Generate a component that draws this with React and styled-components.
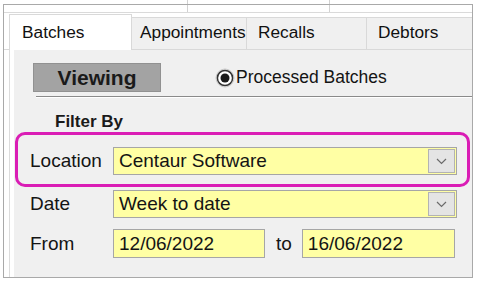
import React from "react";
import styled, { createGlobalStyle } from "styled-components";

const GlobalStyle = createGlobalStyle`
  html, body { margin: 0; padding: 0; background: #ffffff; }
  body { font-family: "Liberation Sans", Arial, sans-serif; color: #161616; }
  * { box-sizing: border-box; }
`;

const Page = styled.div`
  width: 480px;
  height: 283px;
  overflow: hidden;
  display: flex;
  flex-direction: column;
`;

const Cells = styled.div`
  display: flex;
  flex: none;
  height: ${(p) => p.$h}px;
  ${(p) => (p.$line ? "border-bottom: 1px solid #dadada;" : "")}
`;

const Cell = styled.div`
  flex: none;
  width: ${(p) => p.$w}px;
  border-right: 1px solid #d2d2d2;
`;

const Frame = styled.div`
  margin-left: 3px;
  width: 470px;
  height: 274px;
  border: 1px solid #a9a9a9;
  background: #ffffff;
  display: flex;
  flex-direction: column;
  overflow: hidden;
`;

const TabRow = styled.div`
  display: flex;
  align-items: flex-end;
  height: 37px;
  padding-left: 5px;
  border-bottom: 1px solid #d9d9d9;
  flex: none;
`;

const Tab = styled.div`
  flex: none;
  width: ${(p) => p.$w}px;
  height: ${(p) => (p.$active ? 36 : 32)}px;
  padding-left: ${(p) => p.$pl}px;
  padding-top: ${(p) => (p.$active ? 7 : 4)}px;
  font-size: 17.3px;
  line-height: 20px;
  color: #111;
  white-space: nowrap;
  background: ${(p) => (p.$active ? "#ffffff" : "#f0f0f0")};
  border-top: 1px solid #d9d9d9;
  border-right: 1px solid #d9d9d9;
  border-left: ${(p) => (p.$active ? "1px solid #d9d9d9" : "none")};
  margin-bottom: ${(p) => (p.$active ? -1 : 0)}px;
  position: relative;
  z-index: ${(p) => (p.$active ? 1 : 0)};
`;

const TabPage = styled.div`
  flex: 1;
  display: flex;
  margin-left: 5px;
  border-left: 1px solid #dcdcdc;
  padding: 0 0 0 4px;
`;

const Panel = styled.div`
  flex: 1;
  background: #f0f0f0;
  padding-top: 13px;
  display: flex;
  flex-direction: column;
`;

const ViewingRow = styled.div`
  display: flex;
  align-items: center;
  height: 29px;
  padding-left: 19px;
`;

const ViewingBox = styled.div`
  width: 128px;
  height: 29px;
  background: #a3a3a3;
  border: 1px solid #919191;
  display: flex;
  align-items: center;
  justify-content: center;
  font-weight: bold;
  font-size: 21px;
  color: #1a1a1a;
`;

const RadioOption = styled.label`
  display: flex;
  align-items: center;
  margin-left: 54px;
  gap: 1px;
  font-size: 17.5px;
  color: #141414;
`;

const Separator = styled.div`
  margin: 4px 0 0 22px;
  border-top: 1px solid #8a8a8a;
  border-bottom: 1px solid #ffffff;
`;

const SectionTitle = styled.div`
  margin: 14px 0 0 41px;
  font-weight: bold;
  font-size: 17px;
  line-height: 20px;
  color: #1a1a1a;
`;

const Highlight = styled.div`
  margin-left: 1px;
  width: 455px;
  border: 3px solid #da1db5;
  border-radius: 10px;
  padding: 12px 10px 9px 12px;
`;

const Row = styled.div`
  display: flex;
  align-items: center;
  height: ${(p) => p.$h || 28}px;
  margin-top: ${(p) => p.$mt || 0}px;
  margin-left: ${(p) => p.$ml || 0}px;
`;

const Label = styled.div`
  flex: none;
  width: 83px;
  font-size: 19px;
  color: #141414;
`;

const Select = styled.div`
  flex: none;
  width: 344px;
  height: 28px;
  background: #ffffa4;
  border: 1px solid #a6a6a6;
  display: flex;
  align-items: center;
  padding-left: 5px;
  font-size: 19px;
  color: #141414;
`;

const DropButton = styled.div`
  margin-left: auto;
  margin-right: 1px;
  width: 27px;
  height: 24px;
  background: #e4e4e4;
  border: 1px solid #b3b3b3;
  display: flex;
  align-items: center;
  justify-content: center;
`;

const Input = styled.div`
  flex: none;
  width: ${(p) => p.$w}px;
  height: 29px;
  background: #ffffa4;
  border: 1px solid #a6a6a6;
  display: flex;
  align-items: center;
  padding-left: 5px;
  font-size: 19px;
  color: #141414;
`;

const Joiner = styled.div`
  font-size: 19px;
  margin: 0 10px 0 11px;
  color: #141414;
`;

const Chevron = () => (
  <svg width="11" height="7" viewBox="0 0 11 7">
    <path d="M1 1 L5.5 5.5 L10 1" fill="none" stroke="#6a6a6a" strokeWidth="1.2" />
  </svg>
);

const RadioDot = () => (
  <svg width="20" height="20" viewBox="0 0 20 20">
    <circle cx="10" cy="10" r="9" fill="#ffffff" stroke="#c8c8c8" strokeWidth="1" />
    <circle cx="10" cy="10" r="7.6" fill="#ffffff" stroke="#333333" strokeWidth="1.5" />
    <circle cx="10" cy="10" r="4.5" fill="#1a1a1a" />
  </svg>
);

const DropDown = ({ children }) => (
  <Select>
    {children}
    <DropButton>
      <Chevron />
    </DropButton>
  </Select>
);

export default function App() {
  return (
    <Page>
      <GlobalStyle />
      <Cells $h={4}>
        <Cell $w={188} />
        <Cell $w={142} />
      </Cells>
      <Frame>
        <Cells $h={8} $line>
          <Cell $w={184} />
          <Cell $w={142} />
        </Cells>
        <TabRow>
          <Tab $active $w={123} $pl={12}>Batches</Tab>
          <Tab $w={115} $pl={8}>Appointments</Tab>
          <Tab $w={120} $pl={11}>Recalls</Tab>
          <Tab $w={110} $pl={11}>Debtors</Tab>
        </TabRow>
        <TabPage>
          <Panel>
            <ViewingRow>
              <ViewingBox>Viewing</ViewingBox>
              <RadioOption>
                <RadioDot />
                Processed Batches
              </RadioOption>
            </ViewingRow>
            <Separator />
            <SectionTitle>Filter By</SectionTitle>
            <Highlight>
              <Row>
                <Label>Location</Label>
                <DropDown>Centaur Software</DropDown>
              </Row>
            </Highlight>
            <Row $mt={3} $ml={16}>
              <Label>Date</Label>
              <DropDown>Week to date</DropDown>
            </Row>
            <Row $mt={11} $ml={16} $h={29}>
              <Label>From</Label>
              <Input $w={152}>12/06/2022</Input>
              <Joiner>to</Joiner>
              <Input $w={153}>16/06/2022</Input>
            </Row>
          </Panel>
        </TabPage>
      </Frame>
    </Page>
  );
}
